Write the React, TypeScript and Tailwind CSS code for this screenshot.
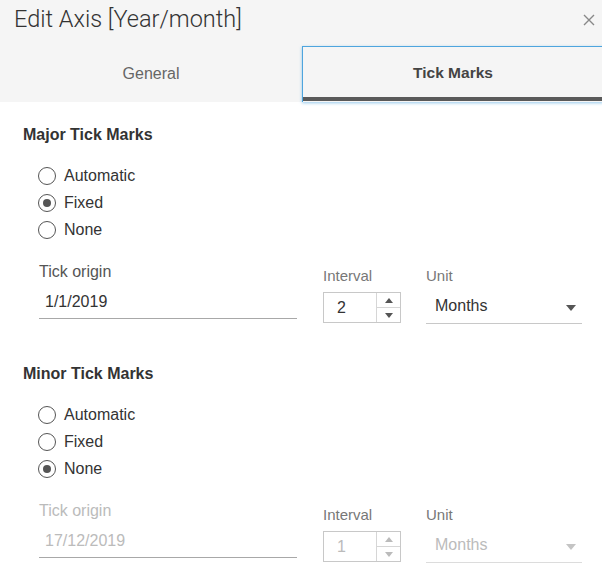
import React from 'react';

const font = { fontFamily: '"Liberation Sans", Arial, sans-serif' };

const Radio = ({ label, checked }: { label: string; checked?: boolean }) => (
  <div className="flex items-center h-[27px]">
    <span className="w-[18px] h-[18px] rounded-full border-[1.5px] border-[#555] flex items-center justify-center">
      {checked && <span className="w-[8px] h-[8px] rounded-full bg-[#555]" />}
    </span>
    <span className="ml-[8px] text-[16px] leading-5 text-[#333]">{label}</span>
  </div>
);

const Spinner = ({ value, disabled }: { value: string; disabled?: boolean }) => (
  <div className="flex w-[78px] h-[31px] border border-[#c8c8c8] bg-white">
    <div className={`flex-1 flex items-center pl-[13px] text-[16px] ${disabled ? 'text-[#bbb]' : 'text-[#333]'}`}>
      {value}
    </div>
    <div className="w-[24px] flex flex-col border-l border-[#d6d6d6]">
      <div className="flex-1 flex items-center justify-center border-b border-[#d6d6d6]">
        <span className={`w-0 h-0 border-l-[4px] border-r-[4px] border-b-[5px] border-l-transparent border-r-transparent ${disabled ? 'border-b-[#bbb]' : 'border-b-[#555]'}`} />
      </div>
      <div className="flex-1 flex items-center justify-center">
        <span className={`w-0 h-0 border-l-[4px] border-r-[4px] border-t-[5px] border-l-transparent border-r-transparent ${disabled ? 'border-t-[#bbb]' : 'border-t-[#555]'}`} />
      </div>
    </div>
  </div>
);

const Section = ({
  title,
  selected,
  origin,
  interval,
  disabled,
  topPad,
}: {
  title: string;
  selected: string;
  origin: string;
  interval: string;
  disabled?: boolean;
  topPad: string;
}) => (
  <div className={topPad}>
    <div className="text-[16px] leading-5 font-bold text-[#333]">{title}</div>
    <div className="mt-[17px] ml-[15px]">
      {['Automatic', 'Fixed', 'None'].map((o) => (
        <Radio key={o} label={o} checked={o === selected} />
      ))}
    </div>
    <div className="mt-[19px] ml-[16px] flex items-start">
      <div className="w-[258px]">
        <div className={`text-[16px] leading-5 ${disabled ? 'text-[#bbb]' : 'text-[#555]'}`}>Tick origin</div>
        <div
          className={`pt-[10px] pb-[6px] pl-[6px] text-[16px] leading-5 border-b-[1.5px] border-[#a8a8a8] ${
            disabled ? 'text-[#bbb]' : 'text-[#333]'
          }`}
        >
          {origin}
        </div>
      </div>
      <div className="ml-[26px] mt-[4px]">
        <div className="text-[15px] leading-5 text-[#777]">Interval</div>
        <div className="mt-[6px]">
          <Spinner value={interval} disabled={disabled} />
        </div>
      </div>
      <div className="ml-[25px] mt-[4px] w-[156px]">
        <div className="text-[15px] leading-5 text-[#777]">Unit</div>
        <div
          className={`flex items-center justify-between pt-[10px] pb-[7px] pl-[9px] pr-[6px] border-b-[1.5px] ${
            disabled ? 'border-[#dcdcdc]' : 'border-[#c8c8c8]'
          }`}
        >
          <span className={`text-[16px] leading-5 ${disabled ? 'text-[#bbb]' : 'text-[#333]'}`}>Months</span>
          <span
            className={`mt-[3px] w-0 h-0 border-l-[5px] border-r-[5px] border-t-[6px] border-l-transparent border-r-transparent ${
              disabled ? 'border-t-[#c4c4c4]' : 'border-t-[#555]'
            }`}
          />
        </div>
      </div>
    </div>
  </div>
);

export default function App() {
  return (
    <div className="w-[602px] h-[584px] overflow-hidden bg-white" style={font}>
      <div className="bg-[#f5f5f5]">
        <div className="h-[46px] flex items-center justify-between pl-[14px] pr-[7px]">
          <span
            className="text-[23.5px] font-light text-[#333] leading-none -mt-[6px]"
            style={{ fontFamily: 'Roboto, "Liberation Sans", sans-serif' }}
          >
            Edit Axis [Year/month]
          </span>
          <svg width="12" height="12" viewBox="0 0 12 12" className="-mt-[7px]">
            <path d="M1 1L11 11M11 1L1 11" stroke="#888" strokeWidth="1.4" />
          </svg>
        </div>
        <div className="flex h-[56px]">
          <div className="w-[302px] flex items-center justify-center text-[16px] text-[#666]">General</div>
          <div className="w-[302px] -mr-[2px] flex items-center justify-center border-[1.5px] border-[#4ea5de] border-b-0 shadow-[0_1px_3px_rgba(78,165,222,0.6)] relative">
            <span className="text-[15.5px] font-bold text-[#444] -mt-[4px]">Tick Marks</span>
            <span className="absolute left-0 right-0 bottom-[1px] h-[4px] bg-[#5a5a5a]" />
          </div>
        </div>
      </div>
      <div className="pl-[23px]">
        <Section title="Major Tick Marks" selected="Fixed" origin="1/1/2019" interval="2" topPad="pt-[23px]" />
        <Section
          title="Minor Tick Marks"
          selected="None"
          origin="17/12/2019"
          interval="1"
          disabled
          topPad="pt-[40px]"
        />
      </div>
    </div>
  );
}
